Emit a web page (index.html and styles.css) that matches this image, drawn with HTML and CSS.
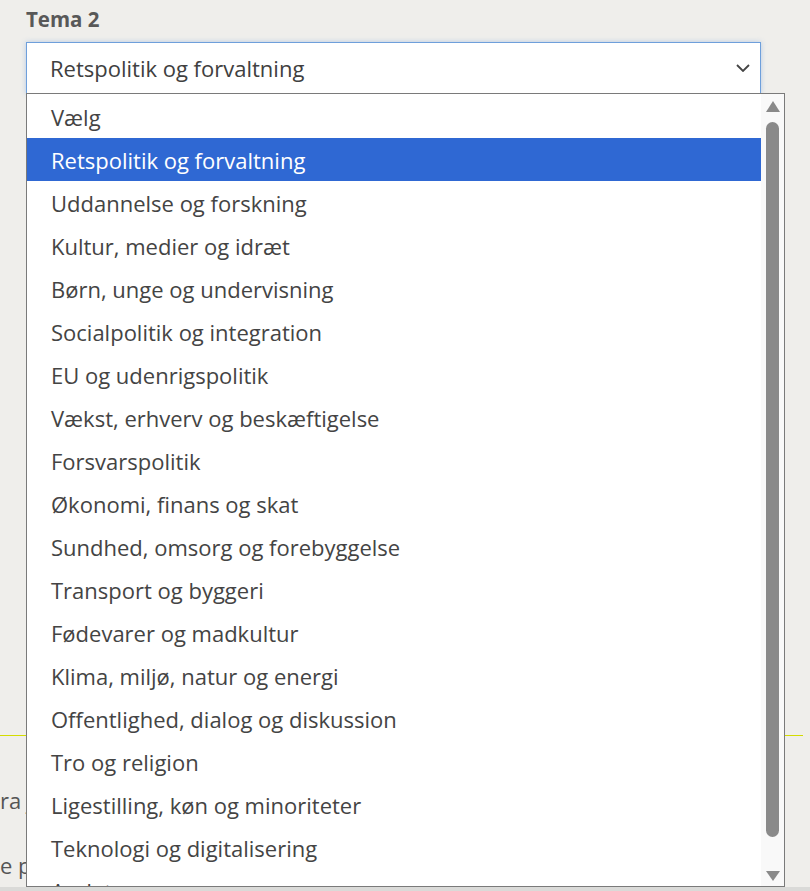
FILE: index.html
```html
<!DOCTYPE html>
<html lang="da">
<head>
<meta charset="utf-8">
<title>Tema 2</title>
<link rel="stylesheet" href="styles.css">
</head>
<body>
<div class="page">
  <div class="field">
    <label class="label" for="tema2">Tema 2</label>
    <div class="select" id="tema2">
      <span class="select-value">Retspolitik og forvaltning</span>
      <svg class="chevron" width="14" height="8" viewBox="0 0 14 8"><path d="M1 1 L7 7 L13 1" fill="none" stroke="#444" stroke-width="1.8"/></svg>
    </div>
  </div>
  <div class="behind">
    <div class="rule"></div>
    <div class="bg-clip">
      <p class="bg-text first">ra j</p>
      <p class="bg-text second">e p</p>
    </div>
  </div>
  <div class="bottom-strip"></div>

  <div class="listbox">
    <ul class="options">
      <li class="option">Vælg</li>
      <li class="option selected">Retspolitik og forvaltning</li>
      <li class="option">Uddannelse og forskning</li>
      <li class="option">Kultur, medier og idræt</li>
      <li class="option">Børn, unge og undervisning</li>
      <li class="option">Socialpolitik og integration</li>
      <li class="option">EU og udenrigspolitik</li>
      <li class="option">Vækst, erhverv og beskæftigelse</li>
      <li class="option">Forsvarspolitik</li>
      <li class="option">Økonomi, finans og skat</li>
      <li class="option">Sundhed, omsorg og forebyggelse</li>
      <li class="option">Transport og byggeri</li>
      <li class="option">Fødevarer og madkultur</li>
      <li class="option">Klima, miljø, natur og energi</li>
      <li class="option">Offentlighed, dialog og diskussion</li>
      <li class="option">Tro og religion</li>
      <li class="option">Ligestilling, køn og minoriteter</li>
      <li class="option">Teknologi og digitalisering</li>
      <li class="option">Andet</li>
    </ul>
    <div class="scrollbar">
      <div class="arrow up"></div>
      <div class="thumb"></div>
      <div class="arrow down"></div>
    </div>
  </div>
</div>
</body>
</html>
```

FILE: styles.css
```css
* { box-sizing: border-box; }
html, body { margin: 0; padding: 0; }
body {
  background: #efeeeb;
  font-family: "Open Sans", "Noto Sans", sans-serif;
  color: #444;
  width: 810px;
  height: 891px;
  overflow: hidden;
}
.page {
  position: relative;
  height: 891px;
}
.field {
  padding: 5px 0 0 26px;
}
.label {
  display: block;
  font-weight: 700;
  font-size: 20.5px;
  color: #585858;
  line-height: 28px;
  margin-bottom: 9px;
}
.select {
  width: 735px;
  height: 52px;
  background: #fff;
  border: 1px solid #6e9fdb;
  box-shadow: 0 0 5px rgba(110, 160, 220, 0.45);
  display: flex;
  align-items: center;
  justify-content: space-between;
  padding: 0 10px 0 23px;
}
.select-value {
  font-size: 22px;
  color: #404040;
}
.chevron { display: block; }
.behind {
  padding-top: 641px;
}
.rule {
  height: 1px;
  width: 803px;
  background: #d4dc00;
}
.bg-clip {
  width: 26px;
  overflow: hidden;
}
.bg-text {
  margin: 0;
  font-size: 22px;
  color: #555;
  line-height: 28px;
  white-space: nowrap;
}
.bg-text.first { margin-top: 50px; }
.bg-text.second { margin-top: 37px; }
.bottom-strip {
  position: absolute;
  left: 0;
  right: 0;
  top: 887px;
  height: 4px;
  background: #dadad8;
}
.listbox {
  position: absolute;
  left: 26px;
  top: 93px;
  width: 759px;
  height: 794px;
  background: #fff;
  border: 1px solid #7a7a7a;
  display: flex;
  overflow: hidden;
}
.options {
  list-style: none;
  margin: 0;
  padding: 1px 0 0 0;
  flex: 1;
}
.option {
  height: 43px;
  line-height: 45px;
  padding-left: 24px;
  font-size: 22px;
  color: #444;
  white-space: nowrap;
}
.option.selected {
  background: #2f68d3;
  color: #fff;
}
.scrollbar {
  width: 23px;
  background: #f9f9f9;
  position: relative;
  display: flex;
  flex-direction: column;
  align-items: center;
  padding-top: 7px;
}
.arrow {
  width: 0;
  height: 0;
  border-left: 7.5px solid transparent;
  border-right: 7.5px solid transparent;
}
.arrow.up {
  border-bottom: 11px solid #8a8a8a;
}
.thumb {
  margin-top: 10px;
  width: 13px;
  height: 715px;
  background: #8a8a8a;
  border-radius: 7px;
}
.arrow.down {
  margin-top: 34px;
  border-top: 10px solid #8a8a8a;
}
```
